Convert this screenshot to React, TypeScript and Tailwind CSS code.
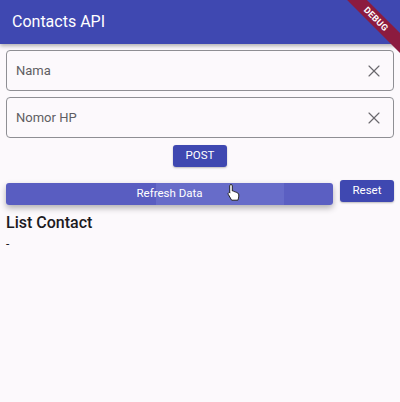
import { X } from 'lucide-react'

export default function App() {
  return (
    <div
      className="relative w-[400px] h-[402px] overflow-hidden bg-[#fcf9fc]"
      style={{ fontFamily: 'Roboto, "Liberation Sans", sans-serif' }}
    >
      {/* App bar */}
      <div className="relative h-[44px] bg-[#3f48b1] shadow-[0_2px_4px_rgba(0,0,0,0.3)] flex items-center px-3 z-10">
        <span className="text-white text-[16px] leading-none">Contacts API</span>
        {/* Debug banner */}
        <div className="absolute top-0 right-0 w-[60px] h-[60px] overflow-hidden pointer-events-none">
          <div className="absolute top-[12px] right-[-24px] w-[96px] h-[14px] rotate-45 bg-[#8c1b3f] flex items-center justify-center">
            <span className="text-white text-[9px] font-bold tracking-[0.3px] leading-none">DEBUG</span>
          </div>
        </div>
      </div>

      <div className="flex flex-col px-[6px] pt-[6px]">
        {/* Inputs */}
        <div className="h-[41px] border border-[#8f8f94] rounded-[4px] flex items-center pl-[9px] pr-[9px]">
          <span className="flex-1 text-[13px] text-[#5f5e63]">Nama</span>
          <X size={20} strokeWidth={1.4} className="text-[#6a696e]" />
        </div>
        <div className="mt-[6px] h-[41px] border border-[#8f8f94] rounded-[4px] flex items-center pl-[9px] pr-[9px]">
          <span className="flex-1 text-[13px] text-[#5f5e63]">Nomor HP</span>
          <X size={20} strokeWidth={1.4} className="text-[#6a696e]" />
        </div>

        {/* POST */}
        <div className="flex justify-center mt-[7px]">
          <button className="w-[54px] h-[22px] rounded-[3px] bg-[#3f48b1] text-white text-[11.5px] shadow-[0_1px_2px_rgba(0,0,0,0.25)]">
            POST
          </button>
        </div>

        {/* Refresh / Reset */}
        <div className="flex gap-[7px] mt-[13px]">
          <div className="relative flex-1">
            <button className="w-full h-[22px] rounded-[3px] bg-[linear-gradient(90deg,#595dc1_0%,#595dc1_46%,#676cc9_46%,#676cc9_85%,#5b5fc2_85%)] text-white text-[11.5px] shadow-[0_3px_6px_rgba(0,0,0,0.3)]">
              Refresh Data
            </button>
            <svg
              className="absolute left-[221px] top-[3px]"
              width="14"
              height="18"
              viewBox="0 0 14 18"
            >
              <path
                d="M4 1.5c.8 0 1.3.6 1.3 1.3v5.2l.4-.1c.7-.1 1.3.2 1.5.8.6-.3 1.3-.1 1.6.5.6-.2 1.3.1 1.5.7l.1.2c.6-.1 1.2.3 1.3.9.2 1.4.2 2.8-.2 4.1l-.6 2.1H4.6L1.4 11.6c-.5-.6-.4-1.4.2-1.8.5-.4 1.2-.3 1.6.1l-.5-.5V2.8c0-.7.5-1.3 1.3-1.3z"
                fill="#fff"
                stroke="#222"
                strokeWidth="1"
                strokeLinejoin="round"
              />
            </svg>
          </div>
          <button className="w-[54px] h-[22px] rounded-[3px] bg-[#3f48b1] text-white text-[11.5px] shadow-[0_1px_2px_rgba(0,0,0,0.25)]">
            Reset
          </button>
        </div>

        {/* List */}
        <h2 className="mt-[7px] text-[16px] font-medium text-[#1c1b1f] leading-[22px]">List Contact</h2>
        <span className="mt-[3px] text-[12px] text-[#1c1b1f] leading-[14px]">-</span>
      </div>
    </div>
  )
}
